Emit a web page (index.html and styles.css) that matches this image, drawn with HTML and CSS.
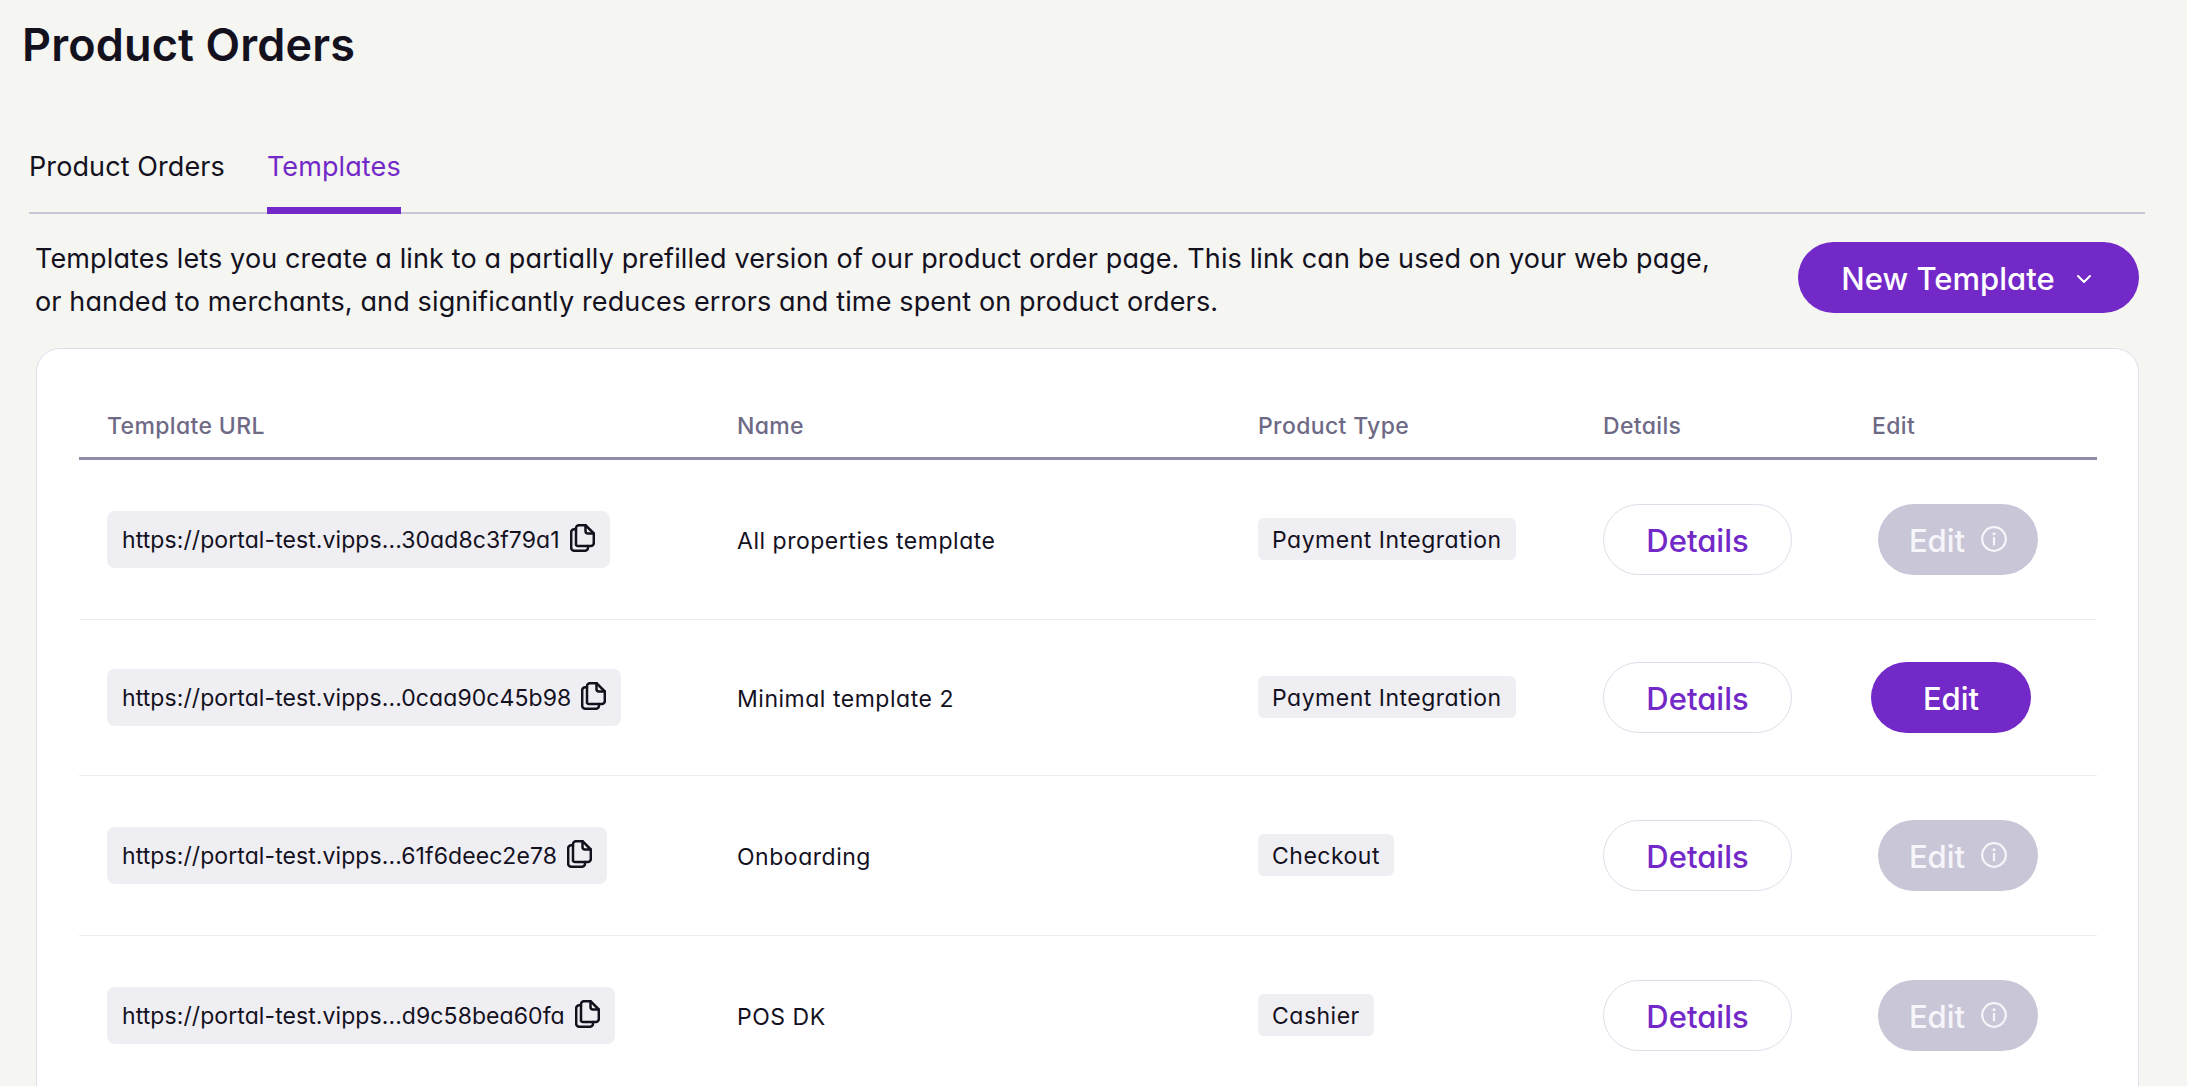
FILE: index.html
```html
<!DOCTYPE html>
<html lang="en">
<head>
<meta charset="utf-8">
<title>Product Orders</title>
<link rel="stylesheet" href="styles.css">
</head>
<body>
<h1 class="title">Product Orders</h1>
<nav class="tabs">
  <a class="tab">Product Orders</a>
  <a class="tab tab-active">Templates</a>
</nav>
<div class="intro">
  <p class="intro-text">Templates lets you create a link to a partially prefilled version of our product order page. This link can be used on your web page,<br>or handed to merchants, and significantly reduces errors and time spent on product orders.</p>
  <button class="btn btn-primary btn-new">New Template
    <svg class="chevron" viewBox="0 0 14 8" width="14" height="8"><path d="M1 1l6 6 6-6" fill="none" stroke="currentColor" stroke-width="2" stroke-linecap="round" stroke-linejoin="round"/></svg>
  </button>
</div>
<section class="card">
  <table class="table">
    <colgroup><col class="c-url"><col class="c-name"><col class="c-type"><col class="c-details"><col class="c-edit"></colgroup>
    <thead>
      <tr><th>Template URL</th><th>Name</th><th>Product Type</th><th>Details</th><th>Edit</th></tr>
    </thead>
    <tbody>
      <tr class="row-first">
        <td><span class="url">https://portal-test.vipps...30ad8c3f79a1<svg class="copy" viewBox="0 0 25 28" width="25" height="28"><use href="#i-copy"/></svg></span></td>
        <td class="cell-text">All properties template</td>
        <td><span class="tag">Payment Integration</span></td>
        <td><button class="btn btn-outline">Details</button></td>
        <td><button class="btn btn-disabled">Edit<svg class="info" viewBox="0 0 26 26" width="26" height="26"><use href="#i-info"/></svg></button></td>
      </tr>
      <tr>
        <td><span class="url">https://portal-test.vipps...0caa90c45b98<svg class="copy" viewBox="0 0 25 28" width="25" height="28"><use href="#i-copy"/></svg></span></td>
        <td class="cell-text">Minimal template 2</td>
        <td><span class="tag">Payment Integration</span></td>
        <td><button class="btn btn-outline">Details</button></td>
        <td><button class="btn btn-primary btn-edit">Edit</button></td>
      </tr>
      <tr class="row-tall">
        <td><span class="url">https://portal-test.vipps...61f6deec2e78<svg class="copy" viewBox="0 0 25 28" width="25" height="28"><use href="#i-copy"/></svg></span></td>
        <td class="cell-text">Onboarding</td>
        <td><span class="tag">Checkout</span></td>
        <td><button class="btn btn-outline">Details</button></td>
        <td><button class="btn btn-disabled">Edit<svg class="info" viewBox="0 0 26 26" width="26" height="26"><use href="#i-info"/></svg></button></td>
      </tr>
      <tr class="row-tall">
        <td><span class="url">https://portal-test.vipps...d9c58bea60fa<svg class="copy" viewBox="0 0 25 28" width="25" height="28"><use href="#i-copy"/></svg></span></td>
        <td class="cell-text">POS DK</td>
        <td><span class="tag">Cashier</span></td>
        <td><button class="btn btn-outline">Details</button></td>
        <td><button class="btn btn-disabled">Edit<svg class="info" viewBox="0 0 26 26" width="26" height="26"><use href="#i-info"/></svg></button></td>
      </tr>
    </tbody>
  </table>
</section>
<svg class="defs" width="0" height="0">
  <defs>
    <g id="i-copy" fill="none" stroke="currentColor" stroke-width="2.5" stroke-linejoin="round" stroke-linecap="round">
      <path d="M6 21V4a2.8 2.8 0 0 1 2.8-2.8H15.5L23.8 9.5V19a3 3 0 0 1-3 3H9a3 3 0 0 1-3-1z"/>
      <path d="M15.5 1.2V7a2.5 2.5 0 0 0 2.5 2.5h5.8"/>
      <path d="M6 5.2H4.2a3 3 0 0 0-3 3V23.8a3 3 0 0 0 3 3H15a3 3 0 0 0 3-3V22"/>
    </g>
    <g id="i-info" fill="none" stroke="currentColor" stroke-width="2.2">
      <circle cx="13" cy="13" r="11.8"/>
      <path d="M13 11.8v6.6" stroke-linecap="round"/>
      <circle cx="13" cy="7.8" r="1.5" fill="currentColor" stroke="none"/>
    </g>
  </defs>
</svg>
</body>
</html>
```
FILE: styles.css
```css
* { box-sizing: border-box; }
html, body { margin: 0; height: 100%; }
body {
  background: #f5f5f1;
  color: #14111f;
  font-family: Inter, "Liberation Sans", sans-serif;
  font-feature-settings: "cv11";
  height: 1086px;
  overflow: hidden;
  padding: 0 48px 0 29px;
}
.title {
  margin: 0 0 0 -7px;
  padding-top: 17px;
  font-size: 45px;
  line-height: 56px;
  font-weight: 600;
  letter-spacing: 0.15px;
}
.tabs {
  display: flex;
  gap: 42px;
  margin: 64px -6px 0 0;
  height: 77px;
  border-bottom: 2px solid #c9c6d8;
  font-size: 27px;
  letter-spacing: 0.1px;
}
.tab { padding-top: 14px; height: 77px; line-height: 32px; }
.tab-active { color: #7329c8; border-bottom: 7px solid #7329c8; }
.intro {
  display: flex;
  justify-content: space-between;
  align-items: flex-start;
  padding: 28px 0 0 6px;
  height: 134px;
}
.intro-text {
  margin: -5px 0 0;
  font-size: 27px;
  line-height: 43px;
  letter-spacing: 0.13px;
  white-space: nowrap;
}
.btn {
  font: inherit;
  font-feature-settings: inherit;
  font-size: 31px;
  font-weight: 500;
  height: 71px;
  border-radius: 36px;
  border: 0;
  display: inline-flex;
  align-items: center;
  justify-content: center;
  vertical-align: middle;
  padding: 2px 0 0;
}
.btn-primary { background: #7329c8; color: #fff; }
.btn-new { width: 341px; gap: 22px; padding-right: 5px; }
.btn-edit { width: 160px; margin-left: -1px; }
.btn-outline { width: 189px; background: #fff; color: #7329c8; border: 1px solid #e0deea; }
.btn-disabled { width: 160px; margin-left: 6px; background: #c9c6d8; color: #f6f5f9; gap: 16px; }
.info { margin-top: -3px; }
.card {
  margin-left: 7px;
  background: #fff;
  border: 1px solid #e0deea;
  border-radius: 24px;
  height: 900px;
  padding: 0 41px 0 42px;
}
.table { width: 2018px; border-collapse: collapse; table-layout: fixed; font-size: 23px; }
.c-url { width: 630px; }
.c-name { width: 521px; }
.c-type { width: 345px; }
.c-details { width: 269px; }
.c-edit { width: 253px; }
th {
  height: 109px;
  padding: 46px 0 0 28px;
  text-align: left;
  font-weight: 500;
  letter-spacing: 0.35px;
  color: #6e6a86;
  border-bottom: 3px solid #8f8aa6;
}
td { padding: 0 0 0 28px; height: 156px; border-bottom: 1px solid #edecf1; }
.row-tall td { height: 160px; }
.row-first td { height: 161px; }
.cell-text { letter-spacing: 0.52px; padding-top: 3px; }
.url {
  display: inline-flex;
  align-items: center;
  height: 57px;
  padding: 2px 15px 0;
  gap: 10px;
  letter-spacing: 0.08px;
  background: #efeef3;
  border-radius: 8px;
  white-space: nowrap;
}
.copy { flex-shrink: 0; margin-top: -5px; }
.tag {
  display: inline-block;
  padding: 1px 14px 0;
  line-height: 42px;
  height: 42px;
  letter-spacing: 0.5px;
  background: #efeef3;
  border-radius: 6px;
  white-space: nowrap;
}
.defs { position: absolute; }
```
